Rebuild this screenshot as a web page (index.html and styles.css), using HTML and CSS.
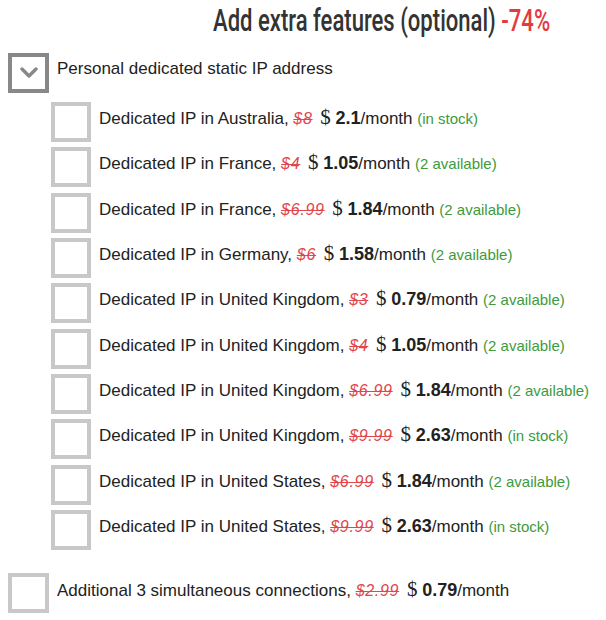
FILE: index.html
```html
<!DOCTYPE html>
<html>
<head>
<meta charset="utf-8">
<link rel="stylesheet" href="styles.css">
</head>
<body>
<div class="page">
  <h2 class="title"><span class="title-text">Add extra features (optional) <span class="discount">-74%</span></span></h2>

  <div class="row parent">
    <span class="box box-dark">
      <svg width="18" height="12" viewBox="0 0 18 12"><path d="M2 2 L9 9 L16 2" fill="none" stroke="#888" stroke-width="3.4" stroke-linecap="round" stroke-linejoin="round"/></svg>
    </span>
    <span class="label">Personal dedicated static IP address</span>
  </div>

  <div class="children">
    <div class="row"><span class="box"></span><span class="label">Dedicated IP in Australia, <s class="old">$8</s> <span class="cur">$</span> <b>2.1</b>/month <span class="stock">(in stock)</span></span></div>
    <div class="row"><span class="box"></span><span class="label">Dedicated IP in France, <s class="old">$4</s> <span class="cur">$</span> <b>1.05</b>/month <span class="stock">(2 available)</span></span></div>
    <div class="row"><span class="box"></span><span class="label">Dedicated IP in France, <s class="old">$6.99</s> <span class="cur">$</span> <b>1.84</b>/month <span class="stock">(2 available)</span></span></div>
    <div class="row"><span class="box"></span><span class="label">Dedicated IP in Germany, <s class="old">$6</s> <span class="cur">$</span> <b>1.58</b>/month <span class="stock">(2 available)</span></span></div>
    <div class="row"><span class="box"></span><span class="label">Dedicated IP in United Kingdom, <s class="old">$3</s> <span class="cur">$</span> <b>0.79</b>/month <span class="stock">(2 available)</span></span></div>
    <div class="row"><span class="box"></span><span class="label">Dedicated IP in United Kingdom, <s class="old">$4</s> <span class="cur">$</span> <b>1.05</b>/month <span class="stock">(2 available)</span></span></div>
    <div class="row"><span class="box"></span><span class="label">Dedicated IP in United Kingdom, <s class="old">$6.99</s> <span class="cur">$</span> <b>1.84</b>/month <span class="stock">(2 available)</span></span></div>
    <div class="row"><span class="box"></span><span class="label">Dedicated IP in United Kingdom, <s class="old">$9.99</s> <span class="cur">$</span> <b>2.63</b>/month <span class="stock">(in stock)</span></span></div>
    <div class="row"><span class="box"></span><span class="label">Dedicated IP in United States, <s class="old">$6.99</s> <span class="cur">$</span> <b>1.84</b>/month <span class="stock">(2 available)</span></span></div>
    <div class="row"><span class="box"></span><span class="label">Dedicated IP in United States, <s class="old">$9.99</s> <span class="cur">$</span> <b>2.63</b>/month <span class="stock">(in stock)</span></span></div>
  </div>

  <div class="row extra">
    <span class="box"></span><span class="label">Additional 3 simultaneous connections, <s class="old">$2.99</s> <span class="cur">$</span> <b>0.79</b>/month</span>
  </div>
</div>
</body>
</html>
```

FILE: styles.css
```css
html, body {
  margin: 0;
  padding: 0;
  background: #fff;
}
.page {
  width: 606px;
  height: 620px;
  overflow: hidden;
  font-family: "Liberation Sans", Arial, sans-serif;
  font-size: 17px;
  color: #222;
}
.title {
  margin: 0;
  padding: 2px 0 0 213px;
  height: 47px;
  box-sizing: border-box;
  font-family: "Roboto", "Liberation Sans", sans-serif;
  font-weight: 500;
  font-size: 31px;
  line-height: 38px;
  color: #333;
  white-space: nowrap;
}
.title-text {
  display: inline-block;
  transform: scaleX(0.712);
  transform-origin: left center;
}
.discount {
  color: #e23b40;
}
.row {
  display: flex;
  align-items: flex-start;
  gap: 8px;
  white-space: nowrap;
}
.box {
  flex: none;
  width: 40px;
  height: 40px;
  box-sizing: border-box;
  border: 4px solid #c8c8c8;
  background: #fff;
}
.box-dark {
  width: 41px;
  height: 40px;
  border-color: #888;
  display: flex;
  align-items: center;
  justify-content: center;
}
.parent {
  margin-left: 8px;
  margin-top: 6px;
}
.label {
  line-height: 20px;
  padding-top: 5px;
}
.parent .label {
  padding-top: 6px;
}
.children {
  margin-top: 9px;
  margin-left: 51px;
  display: flex;
  flex-direction: column;
  gap: 5.33px;
}
.old {
  font-style: italic;
  font-size: 16px;
  letter-spacing: 0.7px;
  color: #e0474c;
  text-decoration: line-through;
  margin-right: 3px;
}
.cur {
  font-family: "Liberation Serif", "Times New Roman", serif;
  font-size: 21px;
}
b {
  font-size: 18px;
}
.stock {
  color: #3d9a3d;
  font-size: 15px;
}
.extra {
  margin-left: 8px;
  margin-top: 23px;
}
.extra .box {
  width: 41px;
}
.extra .label {
  padding-top: 6px;
}
```
